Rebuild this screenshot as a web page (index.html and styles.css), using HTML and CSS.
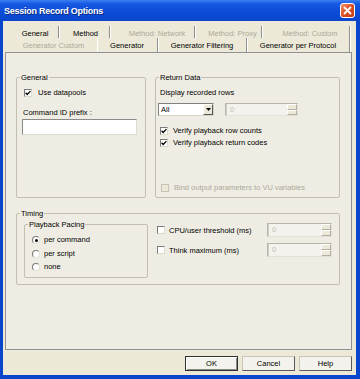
FILE: index.html
```html
<!DOCTYPE html>
<html>
<head>
<meta charset="utf-8">
<title>Session Record Options</title>
<link rel="stylesheet" href="styles.css">
</head>
<body>
<div class="window">
  <div class="titlebar">
    <span class="title">Session Record Options</span>
    <span class="close"><svg width="9" height="9" viewBox="0 0 9 9"><path d="M1.5 1.5 L7.5 7.5 M7.5 1.5 L1.5 7.5" stroke="#fff" stroke-width="1.8" stroke-linecap="round"/></svg></span>
  </div>
  <div class="frame">
    <div class="client">
      <div class="tabs">
        <div class="tabrow back">
          <div class="tab t1">General</div>
          <div class="tab t2">Method</div>
          <div class="tab t3 dis">Method: Network</div>
          <div class="tab t4 dis">Method: Proxy</div>
          <div class="tab t5 dis">Method: Custom</div>
        </div>
        <div class="tabrow front">
          <div class="tab g1 dis">Generator Custom</div>
          <div class="tab g2 sel">Generator</div>
          <div class="tab g3">Generator Filtering</div>
          <div class="tab g4">Generator per Protocol</div>
        </div>
      </div>
      <div class="panel">
        <div class="toprow">
          <fieldset class="group">
            <legend>General</legend>
            <div class="gbody">
              <div class="row cbrow g-use"><span class="cb"><svg width="6" height="6" viewBox="0 0 6 6"><path d="M0.6 2.8 L2.2 4.5 L5.4 1.1" fill="none" stroke="#000" stroke-width="1.3"/></svg></span><span class="lbl">Use datapools</span></div>
              <div class="row g-cmdlbl">Command ID prefix :</div>
              <div class="textbox"></div>
            </div>
          </fieldset>
          <fieldset class="group">
            <legend>Return Data</legend>
            <div class="rbody">
              <div class="row r-disp">Display recorded rows</div>
              <div class="selrow">
                <div class="select"><span class="v">All</span><span class="dd"><svg width="5" height="3" viewBox="0 0 5 3"><path d="M0 0 H5 L2.5 3 Z" fill="#000"/></svg></span></div>
                <div class="spin sp-rows"><span class="val">0</span><span class="arrows"><span></span><span></span></span></div>
              </div>
              <div class="row cbrow r-cb1"><span class="cb"><svg width="6" height="6" viewBox="0 0 6 6"><path d="M0.6 2.8 L2.2 4.5 L5.4 1.1" fill="none" stroke="#000" stroke-width="1.3"/></svg></span><span class="lbl">Verify playback row counts</span></div>
              <div class="row cbrow r-cb2"><span class="cb"><svg width="6" height="6" viewBox="0 0 6 6"><path d="M0.6 2.8 L2.2 4.5 L5.4 1.1" fill="none" stroke="#000" stroke-width="1.3"/></svg></span><span class="lbl">Verify playback return codes</span></div>
              <div class="row cbrow r-bind dis"><span class="cb dis"></span><span class="lbl">Bind output parameters to VU variables</span></div>
            </div>
          </fieldset>
        </div>
        <fieldset class="group timing">
          <legend>Timing</legend>
          <div class="tbody">
            <fieldset class="group pacing">
              <legend>Playback Pacing</legend>
              <div class="pbody">
                <div class="row rbrow"><span class="rb on"></span><span class="lbl">per command</span></div>
                <div class="row rbrow"><span class="rb"></span><span class="lbl">per script</span></div>
                <div class="row rbrow"><span class="rb"></span><span class="lbl">none</span></div>
              </div>
            </fieldset>
            <div class="tright">
              <div class="trow"><span class="cb"></span><span class="lbl">CPU/user threshold (ms)</span><div class="spin sp-t"><span class="val">0</span><span class="arrows"><span></span><span></span></span></div></div>
              <div class="trow"><span class="cb"></span><span class="lbl">Think maximum (ms)</span><div class="spin sp-t"><span class="val">0</span><span class="arrows"><span></span><span></span></span></div></div>
            </div>
          </div>
        </fieldset>
      </div>
      <div class="buttons">
        <div class="btn def">OK</div>
        <div class="btn">Cancel</div>
        <div class="btn">Help</div>
      </div>
    </div>
  </div>
</div>
</body>
</html>
```
FILE: styles.css
```css
* { box-sizing: border-box; }
html, body { margin: 0; padding: 0; }
body {
  width: 360px; height: 379px; overflow: hidden;
  font-family: "Liberation Sans", Arial, sans-serif;
  font-size: 7.5px; color: #000;
  background: #0a46cc;
}
.window { width: 360px; height: 379px; display: flex; flex-direction: column; }
.titlebar {
  height: 21px; flex: none;
  display: flex; align-items: center; justify-content: space-between;
  padding: 0 5px 0 4px;
  background: linear-gradient(#3d7ff2 0%, #1659e2 18%, #0c4cd8 55%, #0a46cc 100%);
}
.title {
  color: #fff; font-weight: bold; font-size: 9px; letter-spacing: -0.25px;
  text-shadow: 1px 1px 0 #0a2a80;
}
.close {
  width: 15px; height: 15px; border: 1px solid #fff; border-radius: 3px;
  background: linear-gradient(135deg, #f2936a, #dc4f22 50%, #c23a12);
  display: flex; align-items: center; justify-content: center;
}
.frame { flex: 1; display: flex; padding: 0 4px 4px 3px; background: #0a46cc; }
.client { flex: 1; display: flex; flex-direction: column; padding-top: 5px; background: #ece9d8; }

/* tabs */
.tabrow { display: flex; }
.tabrow.back { height: 12px; margin-left: 9px; }
.tabrow.front { height: 14px; margin-left: 4px; }
.tab {
  height: 100%; line-height: 15px; text-align: center; white-space: nowrap;
  border-right: 1px solid #8f8f8f; box-shadow: 1px 0 0 #fff;
}
.tab.dis { color: #aca899; }
.t1 { width: 47px; }
.t2 { width: 51px; padding-left: 3px; }
.t3 { width: 85px; padding-left: 10px; }
.t4 { width: 67px; padding-left: 9px; }
.t5 { width: 88px; padding-left: 9px; }
.g1 { width: 90px; padding-left: 3px; border-right: none; box-shadow: none; }
.g2 { width: 61px; }
.g3 { width: 89px; }
.g4 { width: 103px; }
.tab.sel { box-shadow: 1px 0 0 #fff, inset 1px 0 0 #fff; }

/* panel */
.panel {
  height: 298px; margin: 0 4px 0 2px;
  border: 1px solid #8f9192; background: #efede3;
  padding: 20px 11px 0 10px;
}
.group {
  margin: 0; padding: 0; min-width: 0;
  border: 1px solid #c2bfb2; border-radius: 2px;
}
.group > legend { padding: 0 1px; margin-left: 3px; line-height: 9px; }
.toprow { display: grid; grid-template-columns: 130px 1fr; column-gap: 9px; height: 125px; }
.toprow .group { height: 125px; }

.row { display: flex; align-items: center; height: 10px; line-height: 10px; white-space: nowrap; }
.dis, .dis .lbl { color: #aca899; }
.cbrow .lbl { margin-left: 5px; }

.cb {
  width: 8px; height: 8px; flex: none;
  border: 1px solid; border-color: #7a7a7a #dcd9cd #dcd9cd #7a7a7a;
  background: #fff; display: flex; align-items: center; justify-content: center;
}
.cb.dis { background: #ece9d8; border-color: #c6c3b6; }

.gbody { padding: 6px 0 0 5px; }
.g-use { margin-left: 2px; }
.g-use .lbl { margin-left: 6px; }
.g-cmdlbl { margin-top: 10px; margin-left: 1px; }
.textbox {
  margin-top: 1px; width: 115px; height: 16px;
  border: 1px solid; border-color: #8a8a8a #dedbd0 #dedbd0 #8a8a8a;
  background: #fff;
}

.rbody { padding: 6px 0 0 2px; }
.r-disp { margin-left: 2px; }
.selrow { display: flex; gap: 11px; margin-top: 5px; }
.select {
  width: 56px; height: 13px; display: flex;
  border: 1px solid; border-color: #808080 #d8d5ca #d8d5ca #808080;
  background: #fff;
}
.select .v { flex: 1; padding-left: 2px; line-height: 11px; }
.select .dd {
  width: 10px; background: #ece9d8;
  border: 1px solid; border-color: #fff #555 #555 #fff;
  display: flex; align-items: center; justify-content: center;
}
.spin {
  display: flex; height: 14px;
  border: 1px solid; border-color: #b9b6a9 #e4e1d6 #e4e1d6 #b9b6a9;
  background: #f3f2ec;
}
.spin .val { flex: 1; color: #c2bfb2; padding-left: 3px; line-height: 12px; border-left: 1px solid #d0cdc2; }
.spin .arrows { width: 10px; display: flex; flex-direction: column; }
.spin .arrows span {
  flex: 1; background: #ece9d8;
  border: 1px solid; border-color: #fff #b2afa2 #b2afa2 #fff;
}
.sp-rows { width: 73px; height: 13px; }
.r-cb1 { margin-top: 9.5px; margin-left: 2px; }
.r-cb2 { margin-top: 2.5px; margin-left: 2px; }
.r-bind { margin-top: 35px; margin-left: 3px; }

/* timing */
.timing { margin-top: 11px; height: 76px; }
.tbody { display: flex; padding: 2px 7px 0 7px; }
.pacing { width: 124px; height: 58px; flex: none; }
.pbody { padding: 6px 0 0 7px; }
.rbrow + .rbrow { margin-top: 3.5px; }
.rb {
  width: 8px; height: 8px; flex: none; border-radius: 50%;
  border: 1px solid; border-color: #7a7a7a #e4e1d6 #e4e1d6 #7a7a7a;
  background: #fff; display: flex; align-items: center; justify-content: center;
}
.rb.on::after { content: ""; width: 3px; height: 3px; border-radius: 50%; background: #000; }
.rbrow .lbl { margin-left: 4px; }
.tright { flex: 1; margin-left: 9px; margin-top: 3px; }
.trow { display: flex; align-items: center; height: 14px; white-space: nowrap; }
.trow + .trow { margin-top: 6px; }
.trow .lbl { margin-left: 4px; }
.sp-t { width: 65px; margin-left: auto; }

/* buttons */
.buttons { display: flex; justify-content: flex-end; gap: 4px; margin: 6px 4px 0 0; }
.btn {
  width: 53px; height: 15px; text-align: center; line-height: 13px;
  border: 1px solid; border-color: #c8c5b8 #5a5a5a #5a5a5a #c8c5b8;
  background: #f3f2ec;
}
.btn.def { border-color: #303030; box-shadow: inset 1px 1px 0 #fff, inset -1px -1px 0 #8a8a8a; }
```
